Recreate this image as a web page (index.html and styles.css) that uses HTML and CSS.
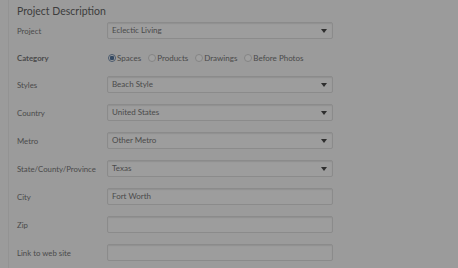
FILE: index.html
```html
<!DOCTYPE html>
<html lang="en">
<head>
    <meta charset="UTF-8">
    <title>Project Description</title>
    <link rel="stylesheet" href="styles.css">
</head>
<body>
    <div class="page">
        <div class="form">
            <h2 class="title">Project Description</h2>
            <div class="row">
                <label class="label">Project</label>
                <div class="field select">Eclectic Living<span class="caret"></span></div>
            </div>
            <div class="row short">
                <label class="label bold">Category</label>
                <div class="radios">
                    <span class="radio checked"></span><span class="opt">Spaces</span>
                    <span class="radio"></span><span class="opt">Products</span>
                    <span class="radio"></span><span class="opt">Drawings</span>
                    <span class="radio"></span><span class="opt">Before Photos</span>
                </div>
            </div>
            <div class="row">
                <label class="label">Styles</label>
                <div class="field select">Beach Style<span class="caret"></span></div>
            </div>
            <div class="row">
                <label class="label">Country</label>
                <div class="field select">United States<span class="caret"></span></div>
            </div>
            <div class="row">
                <label class="label">Metro</label>
                <div class="field select">Other Metro<span class="caret"></span></div>
            </div>
            <div class="row">
                <label class="label">State/County/Province</label>
                <div class="field select">Texas<span class="caret"></span></div>
            </div>
            <div class="row">
                <label class="label">City</label>
                <div class="field">Fort Worth</div>
            </div>
            <div class="row">
                <label class="label">Zip</label>
                <div class="field"></div>
            </div>
            <div class="row">
                <label class="label">Link to web site</label>
                <div class="field"></div>
            </div>
        </div>
    </div>
</body>
</html>
```

FILE: styles.css
```css
*{
    margin: 0;
    padding: 0;
    box-sizing: border-box;
}
body{
    background: #9b9b9b;
    font-family: 'Lato', sans-serif;
    color: #4a4a4a;
    height: 268px;
    overflow: hidden;
}
.page{
    margin-left: 8px;
    border-left: 1px solid #939393;
    height: 100%;
}
.form{
    padding: 4px 0 0 8px;
}
.title{
    font-size: 10.5px;
    font-weight: 400;
    line-height: 14px;
    color: #3d3d3d;
    margin-bottom: 4px;
}
.row{
    display: flex;
    align-items: center;
    height: 17px;
    margin-bottom: 11px;
}
.row.short{
    height: 15px;
}
.label{
    width: 90px;
    font-size: 7.8px;
}
.label.bold{
    font-weight: 700;
}
.field{
    position: relative;
    width: 226px;
    height: 17px;
    border: 1px solid #8b8b8b;
    border-radius: 2px;
    background: #9d9d9d;
    box-shadow: inset 0 1px 1px rgba(0,0,0,.08);
    font-size: 8px;
    line-height: 15px;
    padding-left: 4px;
}
.caret{
    position: absolute;
    right: 5px;
    top: 6px;
    border-left: 3px solid transparent;
    border-right: 3px solid transparent;
    border-top: 4px solid #2e2e2e;
}
.radios{
    display: flex;
    align-items: center;
    font-size: 8px;
    padding-left: 1px;
}
.radio{
    width: 8px;
    height: 8px;
    border: 1px solid #858585;
    border-radius: 50%;
    background: #a0a0a0;
    margin-right: 1px;
}
.radio.checked{
    border-color: #4a5a6e;
    background: radial-gradient(circle, #354a63 0 2px, #a0a0a0 2.5px);
}
.opt{
    margin-right: 7px;
}
```
